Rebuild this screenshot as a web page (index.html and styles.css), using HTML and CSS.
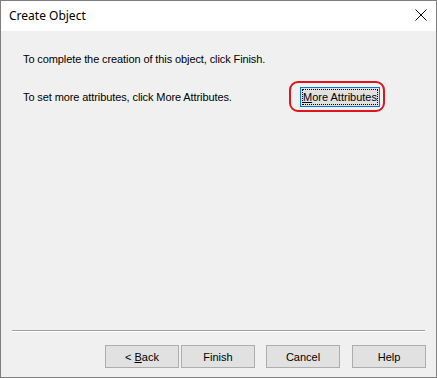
FILE: index.html
```html
<!DOCTYPE html>
<html>
<head>
<meta charset="utf-8">
<link rel="stylesheet" href="styles.css">
</head>
<body>
<div class="window">
  <div class="titlebar">
    <span class="title">Create Object</span>
    <svg class="close" width="12" height="12" viewBox="0 0 12 12"><path d="M0.5 0.5 L11.5 11.5 M11.5 0.5 L0.5 11.5" stroke="#000" stroke-width="1"/></svg>
  </div>
  <div class="content">
    <p class="line">To complete the creation of this object, click Finish.</p>
    <div class="row">
      <p class="line">To set more attributes, click More Attributes.</p>
      <div class="highlight">
        <button class="btn btn-focus"><span class="focus"><u>M</u>ore Attributes</span></button>
      </div>
    </div>
  </div>
  <div class="separator"></div>
  <div class="footer">
    <button class="btn">&lt; <u>B</u>ack</button>
    <button class="btn btn-finish">Finish</button>
    <button class="btn btn-cancel">Cancel</button>
    <button class="btn btn-help">Help</button>
  </div>
</div>
</body>
</html>
```
FILE: styles.css
```css
html, body {
  margin: 0;
  padding: 0;
  background: #f0f0f0;
}
.window {
  box-sizing: border-box;
  width: 437px;
  height: 378px;
  border: 1px solid #7e7e7e;
  background: #f0f0f0;
  display: flex;
  flex-direction: column;
  font-family: "Liberation Sans", Arial, sans-serif;
  font-size: 11px;
  color: #000;
}
.titlebar {
  height: 30px;
  background: #fff;
  display: flex;
  align-items: center;
  justify-content: space-between;
  padding: 0 8px 0 8px;
  flex: none;
}
.title {
  font-family: "Noto Sans", "Open Sans", sans-serif;
  font-size: 12px;
  color: #000;
  margin-top: -1px;
}
.close {
  margin-right: 1px;
  margin-top: -2px;
}
.content {
  flex: 1;
  padding: 22px 56px 0 22px;
}
.line {
  margin: 0;
  line-height: 13px;
  letter-spacing: -0.1px;
}
.row {
  display: flex;
  align-items: center;
  justify-content: space-between;
  margin-top: 21px;
}
.highlight {
  position: relative;
}
.highlight::after {
  content: "";
  position: absolute;
  left: -11px;
  right: -5px;
  top: -6px;
  bottom: -5px;
  border: 2px solid #e0141e;
  border-radius: 9px;
  pointer-events: none;
}
.btn {
  box-sizing: border-box;
  width: 74px;
  height: 23px;
  background: #e1e1e1;
  border: 1px solid #adadad;
  font-family: "Liberation Sans", Arial, sans-serif;
  font-size: 11px;
  color: #000;
  padding: 0;
  margin: 0;
  border-radius: 0;
}
.btn-focus {
  width: 80px;
  height: 20px;
  border-color: #0078d7;
  padding: 1px;
  display: flex;
}
.focus {
  flex: 1;
  display: flex;
  align-items: center;
  justify-content: center;
  border: 1px dotted #000;
}
.separator {
  flex: none;
  margin: 0 11px;
  height: 1px;
  border-top: 1px solid #a0a0a0;
  background: #fff;
}
.footer {
  flex: none;
  display: flex;
  justify-content: flex-end;
  padding: 13px 10px 9px 0;
}
.btn-finish {
  margin-left: 2px;
}
.btn-cancel {
  margin-left: 11px;
}
.btn-help {
  margin-left: 12px;
}
```
